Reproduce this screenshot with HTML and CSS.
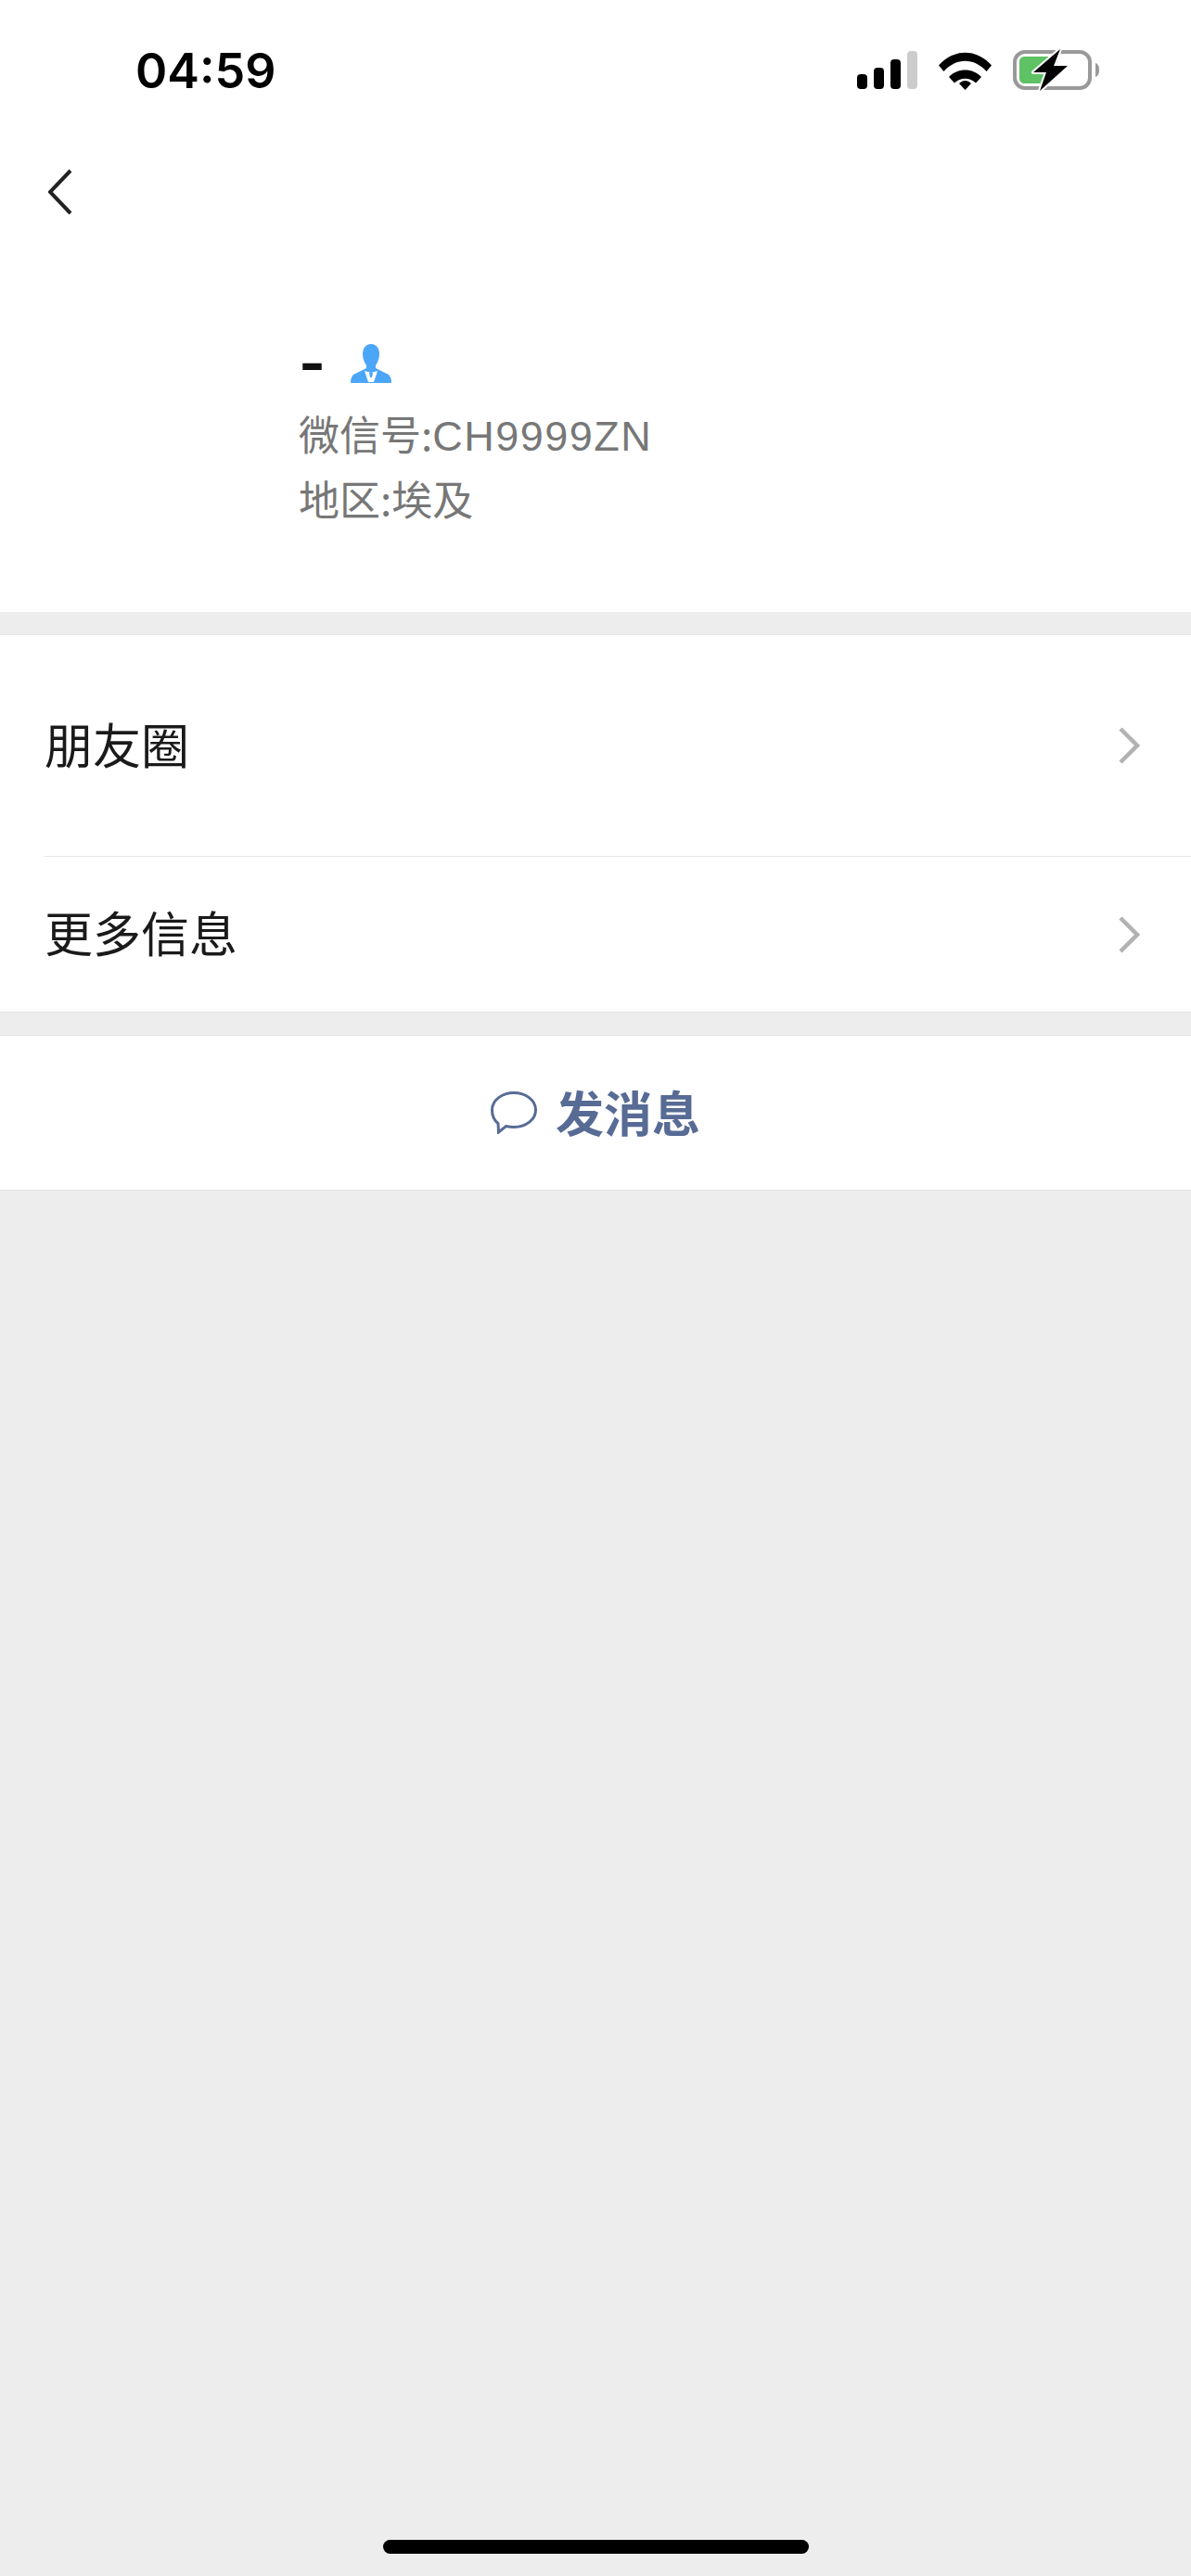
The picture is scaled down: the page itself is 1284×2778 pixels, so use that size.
FILE: index.html
```html
<!DOCTYPE html>
<html lang="zh-CN">
<head>
  <meta charset="UTF-8">
  <title>详细资料</title>
  <link rel="stylesheet" href="styles.css">
</head>
<body>
  <header class="profile">
    <div class="status">
      <span class="time">04:59</span>
      <svg class="status-icons" width="262" height="46" viewBox="0 0 262 46">
        <!-- signal -->
        <rect x="0" y="27" width="11" height="16" rx="4" fill="#000"/>
        <rect x="18" y="20" width="11" height="23" rx="4" fill="#000"/>
        <rect x="36" y="11" width="11" height="32" rx="4" fill="#000"/>
        <rect x="54" y="2" width="11" height="41" rx="4" fill="#ccc"/>
        <!-- wifi -->
        <path d="M88 17.5 C104 -1 129 -1 145 17.5 L139.500 24 C126 9 107 9 93.500 24 Z" fill="#000"/>
        <path d="M99 30 C108 20 125 20 134 30 L128 36.500 C122 30 111 30 105 36.500 Z" fill="#000"/>
        <path d="M110 37 C114 33 119 33 123 37 L116.500 44 Z" fill="#000"/>
        <!-- battery -->
        <rect x="170" y="3" width="81" height="39" rx="11" fill="none" stroke="#999" stroke-width="4"/>
        <path d="M257 15 C260 16 261 19 261 22.500 C261 26 260 29 257 30 Z" fill="#999"/>
        <path d="M181 8 H207 V37 H181 C177 37 175 35 175 31 V14 C175 10 177 8 181 8 Z" fill="#5fc265"/>
        <path d="M219 0 L190 25 H204 L197 45 L227 18 H212 Z" fill="#000" stroke="#fff" stroke-width="4" stroke-linejoin="round" paint-order="stroke"/>
      </svg>
    </div>
    <div class="nav">
      <svg class="back" width="26" height="50" viewBox="0 0 26 50">
        <path d="M24 2 L2 25 L24 48" fill="none" stroke="#222" stroke-width="4"/>
      </svg>
    </div>
    <div class="info">
      <div class="name">
        <span class="name-text">-</span>
        <svg class="badge" width="44" height="42" viewBox="0 0 44 42">
          <path d="M22 0 C28 0 31 5 31 11 C31 16 29 20 27 23 V26 L41 33 C43 35 44 38 44 41 C44 42 43 42 42 42 H2 C1 42 0 42 0 41 C0 38 1 35 3 33 L17 26 V23 C15 20 13 16 13 11 C13 5 16 0 22 0 Z" fill="#4ba6f7"/>
          <path d="M15 29 L22 31 L29 29 L25 41 H19 Z" fill="#fff"/>
          <path d="M20 31 H24 L23 36 H21 Z" fill="#4ba6f7"/>
        </svg>
      </div>
      <p class="meta">微信号<span class="colon">:</span><span class="latin">CH9999ZN</span></p>
      <p class="meta">地区<span class="colon">:</span>埃及</p>
    </div>
  </header>

  <section class="group">
    <div class="row row-first">
      <span>朋友圈</span>
      <svg class="arrow" width="23" height="40" viewBox="0 0 23 40"><path d="M2 2 L20 20 L2 38" fill="none" stroke="#b2b2b2" stroke-width="4.500"/></svg>
    </div>
    <div class="row row-last">
      <span>更多信息</span>
      <svg class="arrow" width="23" height="40" viewBox="0 0 23 40"><path d="M2 2 L20 20 L2 38" fill="none" stroke="#b2b2b2" stroke-width="4.500"/></svg>
    </div>
  </section>

  <section class="group send">
    <svg width="50" height="46" viewBox="0 0 50 46">
      <path d="M25 1.500 C38 1.500 48.500 9.500 48.500 20 C48.500 30.500 38 38.500 25 38.500 C22 38.500 19 38 16.500 37.500 L8.500 44 L8 34.500 C3.500 31 1.500 26 1.500 20 C1.500 9.500 12 1.500 25 1.500 Z" fill="none" stroke="#576b95" stroke-width="3"/>
    </svg>
    <span>发消息</span>
  </section>

  <div class="home-bar"></div>
</body>
</html>
```

FILE: styles.css
```css
* { box-sizing: border-box; }
html, body { margin: 0; padding: 0; }
body {
  width: 1284px;
  height: 2778px;
  display: flex;
  flex-direction: column;
  background: #ededed;
  font-family: "Noto Sans CJK SC", "Liberation Sans", sans-serif;
  overflow: hidden;
}

.profile { height: 660px; background: #fff; }

.status {
  height: 130px;
  padding: 45px 98px 0 146px;
  display: flex;
  justify-content: space-between;
  align-items: flex-start;
}
.time {
  font-family: Inter, "Liberation Sans", sans-serif;
  font-size: 52px;
  font-weight: 600;
  line-height: 64px;
  color: #000;
}
.status-icons { margin-top: 8px; }

.nav { height: 130px; padding: 52px 0 0 52px; }
.back { display: block; }

.info { padding: 0 0 0 322px; margin-top: 90px; }
.name { display: flex; align-items: center; height: 84px; }
.name-text {
  font-family: Inter, "Liberation Sans", sans-serif;
  font-size: 62px;
  font-weight: 700;
  line-height: 72px;
  color: #111;
}
.badge { margin-left: 27px; }
.meta {
  margin: 0;
  font-size: 44px;
  line-height: 67px;
  color: #777;
}
.colon { font-family: "Noto Sans CJK TC", sans-serif; }
.latin {
  font-family: "Liberation Sans", sans-serif;
  font-size: 45px;
  letter-spacing: 1.500px;
}

.group {
  margin-top: 24px;
  background: #fff;
  border-top: 1px solid #e2e2e2;
  border-bottom: 1px solid #e2e2e2;
}
.row {
  margin-left: 48px;
  padding-right: 55px;
  display: flex;
  justify-content: space-between;
  align-items: center;
  font-size: 52px;
  color: #1a1a1a;
}
.row span { margin-top: -6px; }
.row-first { height: 239px; border-bottom: 1px solid #e6e6e6; }
.row-last { height: 167px; }

.send {
  height: 168px;
  display: flex;
  justify-content: center;
  align-items: center;
  gap: 20px;
  font-size: 52px;
  font-weight: 700;
  color: #576b95;
}
.send span { margin-top: -3px; }

.home-bar {
  width: 459px;
  height: 15px;
  margin: auto auto 24px;
  border-radius: 8px;
  background: #000;
}
```
